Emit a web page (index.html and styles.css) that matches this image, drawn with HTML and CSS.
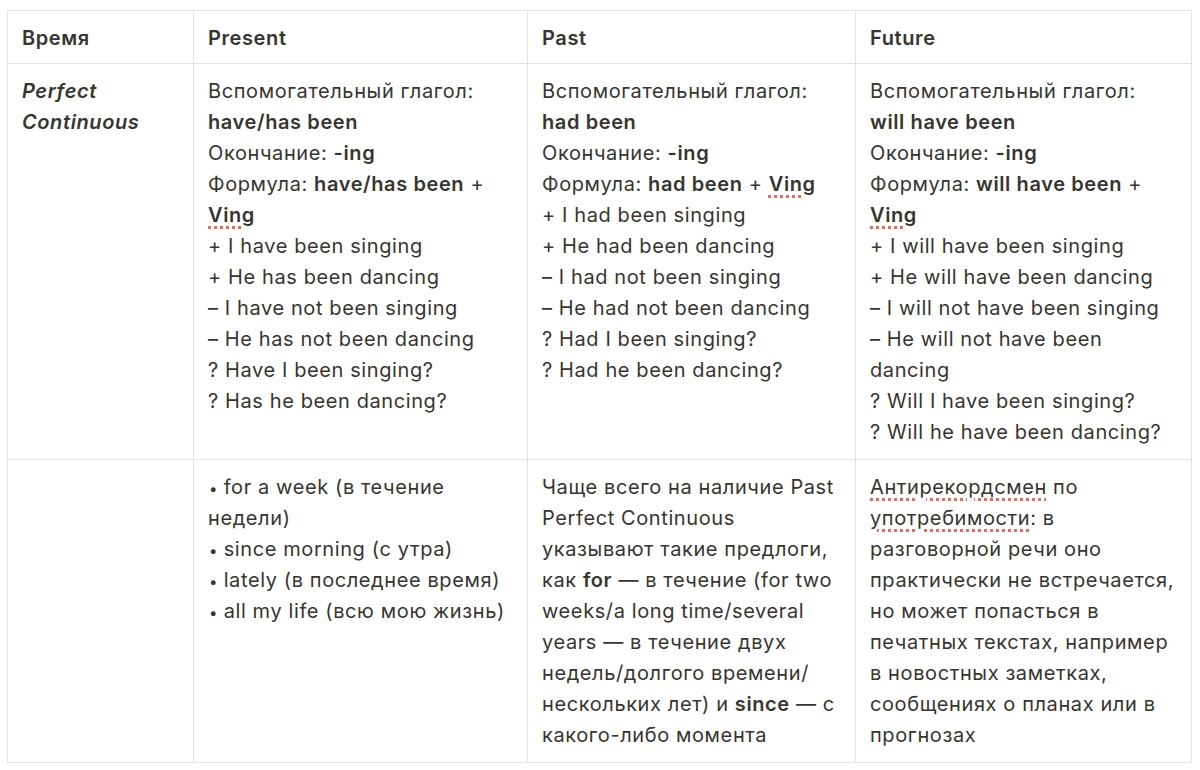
FILE: index.html
```html
<!DOCTYPE html>
<html lang="ru">
<head>
<meta charset="utf-8">
<title>Perfect Continuous</title>
<link rel="stylesheet" href="styles.css">
</head>
<body>
<table class="grid">
  <colgroup>
    <col class="c1"><col class="c2"><col class="c3"><col class="c4">
  </colgroup>
  <thead>
    <tr><th>Время</th><th>Present</th><th>Past</th><th>Future</th></tr>
  </thead>
  <tbody>
    <tr>
      <td><b><i>Perfect Continuous</i></b></td>
      <td>Вспомогательный глагол:<br><b>have/has been</b><br>Окончание: <b>-ing</b><br>Формула: <b>have/has been</b> + <b class="sp">Ving</b><br>+ I have been singing<br>+ He has been dancing<br>– I have not been singing<br>– He has not been dancing<br>? Have I been singing?<br>? Has he been dancing?</td>
      <td>Вспомогательный глагол:<br><b>had been</b><br>Окончание: <b>-ing</b><br>Формула: <b>had been</b> + <b class="sp">Ving</b><br>+ I had been singing<br>+ He had been dancing<br>– I had not been singing<br>– He had not been dancing<br>? Had I been singing?<br>? Had he been dancing?</td>
      <td>Вспомогательный глагол:<br><b>will have been</b><br>Окончание: <b>-ing</b><br>Формула: <b>will have been</b> + <b class="sp">Ving</b><br>+ I will have been singing<br>+ He will have been dancing<br>– I will not have been singing<br>– He will not have been dancing<br>? Will I have been singing?<br>? Will he have been dancing?</td>
    </tr>
    <tr>
      <td></td>
      <td><span class="dot">•</span> for a week (в течение недели)<br><span class="dot">•</span> since morning (с утра)<br><span class="dot">•</span> lately (в последнее время)<br><span class="dot">•</span> all my life (всю мою жизнь)</td>
      <td>Чаще всего на наличие Past Perfect Continuous указывают такие предлоги, как <b>for</b> — в течение (for two weeks/a long time/several years — в течение двух недель/долгого времени/ нескольких лет) и <b>since</b> — с какого-либо момента</td>
      <td><span class="sp">Антирекордсмен</span> по <span class="sp">употребимости</span>: в разговорной речи оно практически не встречается, но может попасться в печатных текстах, например в новостных заметках, сообщениях о планах или в прогнозах</td>
    </tr>
  </tbody>
</table>
</body>
</html>
```

FILE: styles.css
```css
html, body {
  margin: 0;
  padding: 0;
  background: #ffffff;
}
body {
  padding: 10px 0 0 7px;
  font-family: Inter, "Noto Sans", sans-serif;
  color: #37352f;
  font-size: 20px;
  line-height: 31px;
  letter-spacing: 0.6px;
}
.grid {
  border-collapse: collapse;
  table-layout: fixed;
  width: 1184px;
}
.c1 { width: 186px; }
.c2 { width: 334px; }
.c3 { width: 328px; }
.c4 { width: 336px; }
.grid th, .grid td {
  border: 1px solid #e4e4e2;
  text-align: left;
  vertical-align: top;
  padding: 12px 14px 11px;
}
.grid th {
  font-weight: 600;
  padding: 12px 14px 9px;
}
.grid b {
  font-weight: 600;
}
.dot {
  font-size: 15px;
  line-height: 1;
  letter-spacing: 0;
  margin-left: 1px;
}
.sp {
  text-decoration: underline dotted #eb6a5f;
  text-decoration-thickness: 3px;
  text-underline-offset: 4px;
}
```
